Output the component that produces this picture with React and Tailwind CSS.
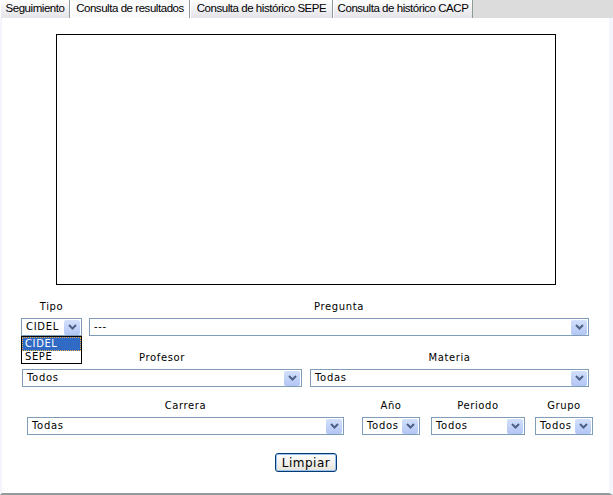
import React from "react";

const tabs = [
  { label: "Seguimiento", w: "w-[70px]" },
  { label: "Consulta de resultados", w: "w-[120px]", active: true },
  { label: "Consulta de histórico SEPE", w: "w-[143px]" },
  { label: "Consulta de histórico CACP", w: "w-[140px]" },
];

const Arrow = () => (
  <span className="flex h-[15px] w-[16px] shrink-0 items-center justify-center rounded-[2px] bg-gradient-to-b from-[#d3e0fd] to-[#b2c6f4]">
    <svg width="9" height="6" viewBox="0 0 9 6">
      <path d="M1 1 L4.5 4.5 L8 1" fill="none" stroke="#4d6185" strokeWidth="2" />
    </svg>
  </span>
);

const Select = ({ value, w }) => (
  <div className={`flex h-[18px] items-center justify-between border border-[#7f9db9] bg-white pl-[4px] pr-[1px] ${w}`}>
    <span className="text-[10px] leading-none tracking-[0.7px] text-black">{value}</span>
    <Arrow />
  </div>
);

const Field = ({ label, value, w }) => (
  <div className="flex flex-col items-center">
    <div className="mb-[5px] text-[10px] leading-[12px] tracking-[0.6px] text-black">{label}</div>
    <Select value={value} w={w} />
  </div>
);

export default function App() {
  return (
    <div className="flex h-[495px] w-[613px] flex-col bg-white font-['DejaVu_Sans',sans-serif]">
      <div className="flex h-[18px] shrink-0 bg-[#dcdcdc]">
        {tabs.map((t) => (
          <div
            key={t.label}
            className={`flex h-[18px] items-center justify-center whitespace-nowrap border-r border-[#919b9c] border-l border-l-white font-['Liberation_Sans',sans-serif] text-[11.5px] tracking-[-0.45px] text-black ${t.w} ${
              t.active ? "bg-[#fbfbfd]" : "bg-gradient-to-b from-white to-[#e3e3e9]"
            }`}
          >
            {t.label}
          </div>
        ))}
      </div>

      <div className="relative flex flex-1 flex-col border-b-[2px] border-l-[2px] border-r-[4px] border-b-[#919b9c] border-l-[#f4f4fc] border-r-[#f4f4fc]">
        <div className="ml-[54px] mt-[16px] h-[251px] w-[500px] border border-black" />

        <div className="mt-[16px] flex items-start">
          <div className="ml-[19px]">
            <Field label="Tipo" value="CIDEL" w="w-[61px]" />
          </div>
          <div className="ml-[7px]">
            <Field label="Pregunta" value="---" w="w-[500px]" />
          </div>
        </div>

        <div className="absolute left-[19px] top-[318px] w-[61px] border border-black bg-white text-[10px] leading-[12px] tracking-[0.6px]">
          <div className="border border-dotted border-[#f0b040] bg-[#316ac5] pl-[2px] text-white">CIDEL</div>
          <div className="pl-[3px] text-black">SEPE</div>
        </div>

        <div className="mt-[16px] flex items-start">
          <div className="ml-[20px]">
            <Field label="Profesor" value="Todos" w="w-[280px]" />
          </div>
          <div className="ml-[8px]">
            <Field label="Materia" value="Todas" w="w-[279px]" />
          </div>
        </div>

        <div className="mt-[13px] flex items-start">
          <div className="ml-[25px]">
            <Field label="Carrera" value="Todas" w="w-[317px]" />
          </div>
          <div className="ml-[18px]">
            <Field label="Año" value="Todos" w="w-[58px]" />
          </div>
          <div className="ml-[11px]">
            <Field label="Periodo" value="Todos" w="w-[94px]" />
          </div>
          <div className="ml-[10px]">
            <Field label="Grupo" value="Todos" w="w-[58px]" />
          </div>
        </div>

        <div className="mt-[18px] flex">
          <button className="ml-[273px] h-[19px] w-[62px] rounded-[3px] border border-[#003c74] bg-gradient-to-b from-white to-[#e6e4da] text-[12px] font-normal leading-none tracking-[0.5px] text-black shadow-[inset_0_0_0_1px_#9ec2f0]">
            Limpiar
          </button>
        </div>
      </div>
    </div>
  );
}
